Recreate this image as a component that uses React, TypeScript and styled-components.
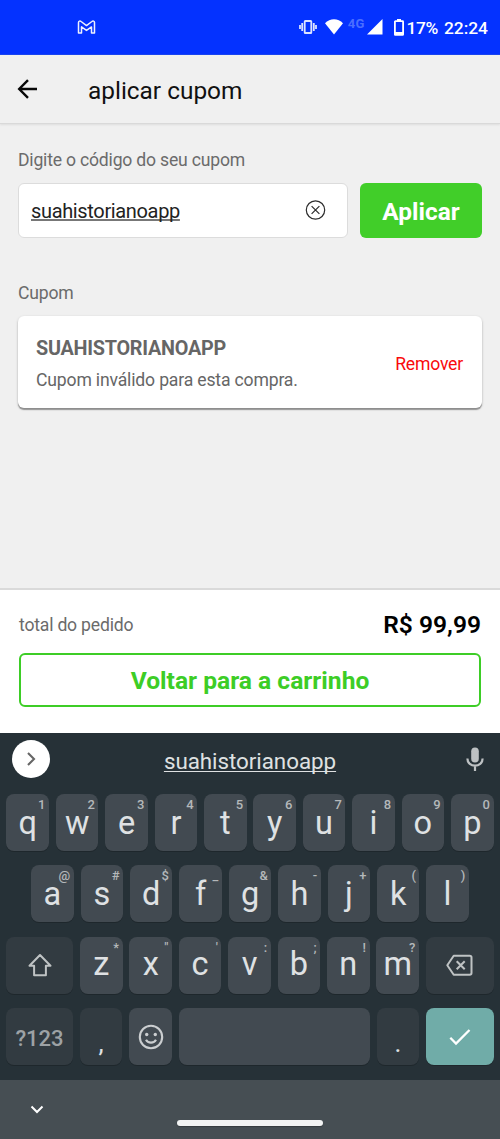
import React from "react";
import styled, { createGlobalStyle, css } from "styled-components";

const GlobalStyle = createGlobalStyle`
  *, *::before, *::after { box-sizing: border-box; }
  body { margin: 0; font-family: Roboto, sans-serif; background: #f0f0f0; }
  button, input { font-family: inherit; }
  svg { display: block; flex: none; }
`;

const Screen = styled.div`
  width: 500px;
  height: 1139px;
  display: flex;
  flex-direction: column;
  overflow: hidden;
  background: #f0f0f0;
`;

const StatusBar = styled.div`
  height: 55px;
  flex: none;
  display: flex;
  align-items: center;
  padding: 0 12px 0 77px;
  background: #0432ff;
  border-bottom: 1px solid #1a45f0;
  color: #fff;
`;

const StatusIcons = styled.div`
  margin-left: auto;
  display: flex;
  align-items: center;
`;

const Spacer = styled.span<{ $width: number }>`
  width: ${(p) => p.$width}px;
`;

const Network = styled.span`
  margin: -6px 2px 0 5px;
  font-size: 13px;
  font-weight: 700;
  line-height: 16px;
  letter-spacing: 0.2px;
  color: #4a6eff;
`;

const StatusText = styled.span`
  margin: 1px 0 0 6px;
  font-size: 17.4px;
  font-weight: 500;
  line-height: 20px;
`;

const BatteryText = styled(StatusText)`
  margin-left: 3px;
  letter-spacing: -0.4px;
`;

const Header = styled.header`
  height: 69px;
  flex: none;
  display: flex;
  align-items: center;
  gap: 50px;
  padding: 0 17px;
  border-bottom: 1px solid #d9d9d9;
  box-shadow: 0 1px 2px rgba(0, 0, 0, 0.08);
`;

const Title = styled.h1`
  margin: 3px 0 0;
  font-size: 24.4px;
  font-weight: 400;
  line-height: 30px;
  color: #111;
`;

const Content = styled.main`
  height: 464px;
  flex: none;
  padding: 26px 18px 0;
`;

const Label = styled.div`
  font-size: 17.6px;
  line-height: 20px;
  letter-spacing: -0.2px;
  color: #6b6b6b;
`;

const CouponForm = styled.div`
  display: flex;
  gap: 12px;
  margin: 13px 0 45px;
`;

const Field = styled.div`
  width: 330px;
  height: 55px;
  display: flex;
  align-items: center;
  justify-content: space-between;
  padding: 0 21px 1px 12px;
  border: 1px solid #dcdcdc;
  border-radius: 6px;
  background: #fff;
`;

const FieldText = styled.span`
  margin-top: 2px;
  font-size: 20px;
  line-height: 24px;
  letter-spacing: -0.35px;
  color: #222;
  text-decoration: underline 2px #777;
  text-decoration-skip-ink: none;
  text-underline-offset: 1px;
`;

const ApplyButton = styled.button`
  width: 122px;
  height: 55px;
  padding: 2px 0 0;
  border: 0;
  border-radius: 6px;
  background: #41ce29;
  color: #fff;
  font-size: 24.4px;
  font-weight: 700;
`;

const CouponCard = styled.section`
  height: 92px;
  display: flex;
  align-items: center;
  justify-content: space-between;
  margin-top: 13px;
  padding: 2px 19px 0 18px;
  border-radius: 6px;
  background: #fff;
  box-shadow: 0 2px 1px rgba(0, 0, 0, 0.32), 0 1px 3px rgba(0, 0, 0, 0.2);
`;

const CouponCode = styled.div`
  font-size: 19.8px;
  font-weight: 700;
  line-height: 24px;
  letter-spacing: -0.25px;
  color: #666;
`;

const CouponMessage = styled.div`
  margin-top: 9px;
  font-size: 17.6px;
  line-height: 20px;
  letter-spacing: -0.17px;
  color: #666;
`;

const RemoveLink = styled.a`
  margin-top: 1px;
  font-size: 17.6px;
  line-height: 20px;
  letter-spacing: -0.2px;
  color: #f9090c;
`;

const Summary = styled.footer`
  height: 145px;
  flex: none;
  padding: 18px 19px 0;
  border-top: 2px solid #dadada;
  background: #fff;
`;

const TotalRow = styled.div`
  height: 34px;
  display: flex;
  align-items: center;
  justify-content: space-between;
  margin-bottom: 11px;
`;

const TotalValue = styled.strong`
  margin-top: -2px;
  font-size: 24.6px;
  font-weight: 600;
  color: #000;
`;

const BackButton = styled.button`
  width: 462px;
  height: 54px;
  padding: 1px 0 0;
  border: 2px solid #3dcd26;
  border-radius: 6px;
  background: #fff;
  color: #3dcd26;
  font-size: 24.6px;
  font-weight: 700;
`;

const Keyboard = styled.div`
  height: 347px;
  flex: none;
  display: flex;
  flex-direction: column;
  background: #263137;
`;

const SuggestionBar = styled.div`
  height: 61px;
  flex: none;
  display: grid;
  grid-template-columns: 38px 1fr 38px;
  align-items: center;
  justify-items: center;
  padding: 0 6px 9px 12px;
`;

const Expand = styled.div`
  width: 38px;
  height: 38px;
  display: flex;
  align-items: center;
  justify-content: center;
  border-radius: 50%;
  background: #fff;
`;

const Suggestion = styled.span`
  margin: 4px 6px 0 0;
  font-size: 22.4px;
  line-height: 26px;
  letter-spacing: -0.05px;
  color: #dfe1e2;
  text-decoration: underline 1px;
  text-decoration-skip-ink: none;
  text-underline-offset: 2px;
`;

const Keys = styled.div`
  display: flex;
  flex-direction: column;
  gap: 14.4px;
`;

const KeyRow = styled.div`
  display: flex;
  justify-content: center;
  gap: 6.9px;
`;

type KeyTone = "letter" | "dark" | "accent";
const tones: Record<KeyTone, string> = { letter: "#424a51", dark: "#323b41", accent: "#70aca8" };

const KeyCap = styled.div<{ $width?: number; $tone?: KeyTone }>`
  position: relative;
  width: ${(p) => p.$width ?? 42.5}px;
  height: 57px;
  flex: none;
  display: flex;
  align-items: center;
  justify-content: center;
  border-radius: 8px;
  background: ${(p) => tones[p.$tone ?? "letter"]};
  box-shadow: 0 1px 0 rgba(0, 0, 0, 0.2);
  color: #dfe1e3;
`;

const Letter = styled.span<{ $lift?: number }>`
  font-size: 32.5px;
  line-height: 38px;
  ${(p) => p.$lift && css`padding-bottom: ${p.$lift}px;`}
`;

const Hint = styled.span`
  position: absolute;
  top: 3px;
  right: 3.500px;
  font-size: 13px;
  font-weight: 500;
  line-height: 15px;
  color: #b4b8ba;
`;

const ModeLabel = styled.span`
  padding-top: 3px;
  font-size: 22px;
  font-weight: 500;
  color: #9da2a5;
`;

const Punctuation = styled.span`
  padding-top: 12px;
  font-size: 26px;
  line-height: 30px;
`;

const NavBar = styled.div`
  height: 59px;
  flex: none;
  display: grid;
  grid-template-columns: 147px 146px 1fr;
  margin-top: auto;
  padding-left: 30px;
  background: #464e53;
`;

const HideIcon = styled.div`
  padding-top: 23px;
`;

const HomeHandle = styled.div`
  height: 6px;
  margin-top: 40px;
  border-radius: 3px;
  background: #f2f3f3;
  box-shadow: 0 1px 1px rgba(0, 0, 0, 0.25);
`;

const MailIcon = () => (
  <svg width="19" height="15" viewBox="0 0 19 15" fill="none" stroke="#eef1ff" strokeWidth="1.5" strokeLinejoin="round">
    <path d="M1.500 13V2.400C1.500 1 3.100.7 4.100 1.500L9.500 5.600l5.400-4.100c1-.8 2.600-.5 2.600.9V13h-3V6.900l-5 3.500-5-3.500V13z" />
  </svg>
);

const VibrateIcon = () => (
  <svg width="18" height="14" viewBox="0 0 18 14" fill="none" stroke="#dce3ff" strokeWidth="1.800">
    <rect x="5.700" y="1" width="6.600" height="12" rx=".6" />
    <path d="M3.200 3v8M1 5v4M14.800 3v8M17 5v4" />
  </svg>
);

const WifiIcon = () => (
  <svg width="18" height="16" viewBox="0 0 18 16" fill="#fff">
    <path d="M0 4.300C5-1 13-1 18 4.300L9 15.500z" />
  </svg>
);

const SignalIcon = () => (
  <svg width="16" height="16" viewBox="0 0 16 16" fill="#fff">
    <path d="M15.500 0v15.500H0z" />
  </svg>
);

const BatteryIcon = () => (
  <svg width="10" height="17" viewBox="0 0 10 17" fill="none">
    <path d="M3 0h4v2H3z" fill="#fff" />
    <rect x=".9" y="2.200" width="8.200" height="13.700" rx=".5" stroke="#fff" strokeWidth="1.800" />
    <path d="M1 13h8v3H1z" fill="#fff" />
  </svg>
);

const BackIcon = () => (
  <svg width="21" height="20" viewBox="0 0 21 20" fill="none" stroke="#080808" strokeWidth="2.400">
    <path d="M20 10H2.300M11 1.200 2.200 10l8.800 8.800" />
  </svg>
);

const ClearIcon = () => (
  <svg width="21" height="20" viewBox="0 0 21 20" fill="none" stroke="#2c2c2c" strokeWidth="1.200">
    <circle cx="10.500" cy="10" r="9.200" />
    <path d="m6.600 6.100 7.800 7.800M14.400 6.100l-7.800 7.800" />
  </svg>
);

const ExpandIcon = () => (
  <svg width="10" height="14" viewBox="0 0 10 14" fill="none" stroke="#666" strokeWidth="2.100">
    <path d="m2 1 6 6-6 6" />
  </svg>
);

const MicIcon = () => (
  <svg width="20" height="26" viewBox="0 0 20 26" fill="none" stroke="#bdc1c3">
    <rect x="6.200" y="1.500" width="7.600" height="15" rx="3.800" fill="#bdc1c3" stroke="none" />
    <path d="M2.400 12.500c0 9.400 15.200 9.400 15.200 0M10 19.500v5.500" strokeWidth="2.200" />
  </svg>
);

const ShiftIcon = () => (
  <svg width="24" height="24" viewBox="0 0 24 24" fill="none" stroke="#bfc3c4" strokeWidth="2" strokeLinejoin="round">
    <path d="M12 2 1.500 12.700h4.600v9.500h11.800v-9.500h4.600z" />
  </svg>
);

const DeleteIcon = () => (
  <svg width="27" height="22" viewBox="0 0 27 22" fill="none" stroke="#bfc3c4" strokeWidth="2" strokeLinejoin="round">
    <path d="M7.700 1.700h16c1 0 1.800.7 1.800 1.700v15.600c0 1-.8 1.700-1.800 1.700h-16L1.300 11.200z" />
    <path d="m10.700 7.200 8 8M18.700 7.200l-8 8" />
  </svg>
);

const SmileIcon = () => (
  <svg width="26" height="26" viewBox="0 0 26 26" fill="none" stroke="#cbced0" strokeWidth="2.100">
    <circle cx="13" cy="13" r="11.200" />
    <circle cx="8.700" cy="10.500" r="1.700" fill="#cbced0" stroke="none" />
    <circle cx="17.300" cy="10.500" r="1.700" fill="#cbced0" stroke="none" />
    <path d="M8 15.800c1.900 3.800 8.100 3.800 10 0" />
  </svg>
);

const CheckIcon = () => (
  <svg width="22" height="18" viewBox="0 0 22 18" fill="none" stroke="#fff" strokeWidth="2.300">
    <path d="m1.300 9.700 5.700 5.800L20.500 2" />
  </svg>
);

const HideKeyboardIcon = () => (
  <svg width="14" height="13" viewBox="0 0 14 13" fill="none" stroke="#fff" strokeWidth="2">
    <path d="m1.500 3.500 5.500 5.500 5.500-5.500" />
  </svg>
);

const topRow = ["q1", "w2", "e3", "r4", "t5", "y6", "u7", "i8", "o9", "p0"];
const homeRow = ["a@", "s#", "d$", "f_", "g&", "h-", "j+", "k(", "l)"];
const lowerRow = ["z*", 'x"', "c'", "v:", "b;", "n!", "m?"];

const LetterKey = ({ pair, lift }: { pair: string; lift?: number }) => (
  <KeyCap>
    <Letter $lift={lift}>{pair[0]}</Letter>
    <Hint>{pair[1]}</Hint>
  </KeyCap>
);

export default function App() {
  return (
    <Screen>
      <GlobalStyle />
      <StatusBar>
        <MailIcon />
        <StatusIcons>
          <VibrateIcon />
          <Spacer $width={8} />
          <WifiIcon />
          <Network>4G</Network>
          <SignalIcon />
          <Spacer $width={11} />
          <BatteryIcon />
          <BatteryText>17%</BatteryText>
          <StatusText>22:24</StatusText>
        </StatusIcons>
      </StatusBar>
      <Header>
        <BackIcon />
        <Title>aplicar cupom</Title>
      </Header>
      <Content>
        <Label>Digite o código do seu cupom</Label>
        <CouponForm>
          <Field>
            <FieldText>suahistorianoapp</FieldText>
            <ClearIcon />
          </Field>
          <ApplyButton>Aplicar</ApplyButton>
        </CouponForm>
        <Label>Cupom</Label>
        <CouponCard>
          <div>
            <CouponCode>SUAHISTORIANOAPP</CouponCode>
            <CouponMessage>Cupom inválido para esta compra.</CouponMessage>
          </div>
          <RemoveLink>Remover</RemoveLink>
        </CouponCard>
      </Content>
      <Summary>
        <TotalRow>
          <Label>total do pedido</Label>
          <TotalValue>R$ 99,99</TotalValue>
        </TotalRow>
        <BackButton>Voltar para a carrinho</BackButton>
      </Summary>
      <Keyboard>
        <SuggestionBar>
          <Expand>
            <ExpandIcon />
          </Expand>
          <Suggestion>suahistorianoapp</Suggestion>
          <MicIcon />
        </SuggestionBar>
        <Keys>
          <KeyRow>{topRow.map((k) => <LetterKey key={k} pair={k} />)}</KeyRow>
          <KeyRow>{homeRow.map((k) => <LetterKey key={k} pair={k} />)}</KeyRow>
          <KeyRow>
            <KeyCap $width={67} $tone="dark"><ShiftIcon /></KeyCap>
            {lowerRow.map((k) => <LetterKey key={k} pair={k} lift={2} />)}
            <KeyCap $width={68} $tone="dark"><DeleteIcon /></KeyCap>
          </KeyRow>
          <KeyRow>
            <KeyCap $width={67} $tone="dark"><ModeLabel>?123</ModeLabel></KeyCap>
            <KeyCap $tone="dark"><Punctuation>,</Punctuation></KeyCap>
            <KeyCap><SmileIcon /></KeyCap>
            <KeyCap $width={191} />
            <KeyCap $tone="dark"><Punctuation>.</Punctuation></KeyCap>
            <KeyCap $width={68} $tone="accent"><CheckIcon /></KeyCap>
          </KeyRow>
        </Keys>
      </Keyboard>
      <NavBar>
        <HideIcon>
          <HideKeyboardIcon />
        </HideIcon>
        <HomeHandle />
      </NavBar>
    </Screen>
  );
}
